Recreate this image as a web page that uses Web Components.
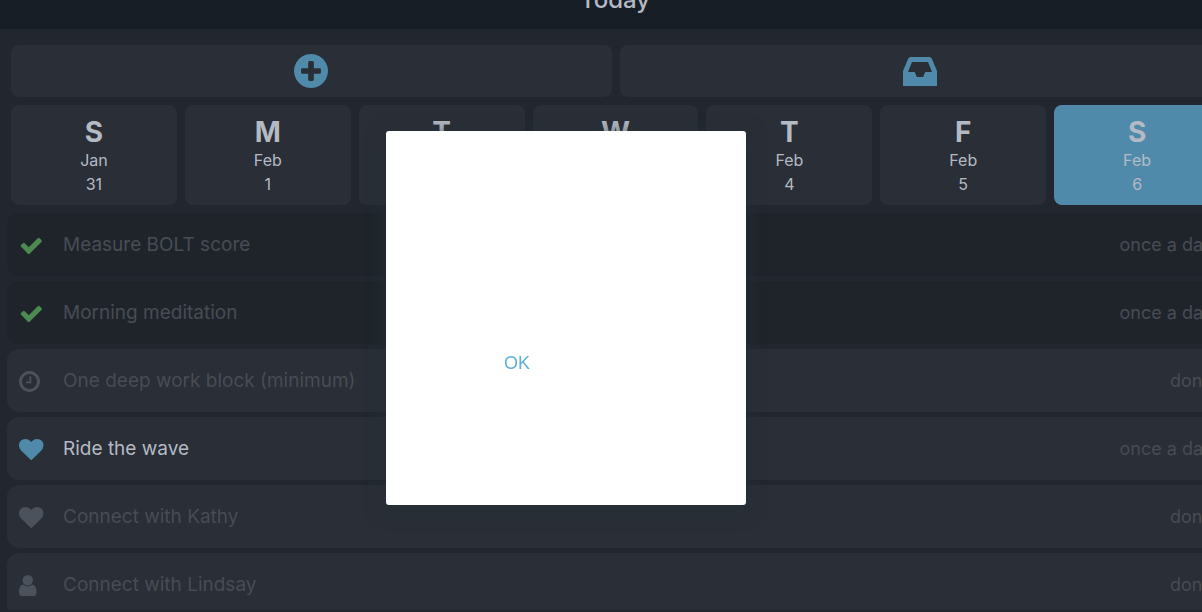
<!DOCTYPE html>
<html lang="en">
<head>
<meta charset="utf-8">
<meta name="viewport" content="width=device-width, initial-scale=1">
<title>Today</title>
<style>
  html, body { margin: 0; height: 100%; overflow: hidden; }
  body { background: #22272f; color: #b4bac4; font-family: Inter, "Noto Sans", sans-serif; }
</style>
</head>
<body>
<today-app></today-app>
<script>
const ICONS = {
  plus: ['128 128 1536 1536', 'M1344 960v-128q0-26-19-45t-45-19h-256v-256q0-26-19-45t-45-19h-128q-26 0-45 19t-19 45v256h-256q-26 0-45 19t-19 45v128q0 26 19 45t45 19h256v256q0 26 19 45t45 19h128q26 0 45-19t19-45v-256h256q26 0 45-19t19-45zm320-64q0 209-103 385.5t-279.5 279.5-385.5 103-385.5-103-279.5-279.5-103-385.5 103-385.5 279.500-279.500 385.500-103 385.500 103 279.500 279.500 103 385.500z'],
  inbox: ['0 0 34 29', 'M0 14 5 2Q6 0 7.500 0h19Q28 0 29 2l5 12v15H0zM9 5 5 15H11.700l2.200 5h6.200l2.200-5H29L25 5z'],
  check: ['0 128 1792 1536', 'M1671 566q0 40-28 68l-724 724-136 136q-28 28-68 28t-68-28l-136-136-362-362q-28-28-28-68t28-68l136-136q28-28 68-28t68 28l294 295 656-657q28-28 68-28t68 28l136 136q28 28 28 68z'],
  clock: ['128 128 1536 1536', 'M1024 544v448q0 14-9 23t-23 9h-320q-14 0-23-9t-9-23v-64q0-14 9-23t23-9h224v-352q0-14 9-23t23-9h64q14 0 23 9t9 23zm416 352q0-148-73-273t-198-198-273-73-273 73-198 198-73 273 73 273 198 198 273 73 273-73 198-198 73-273zm224 0q0 209-103 385.500t-279.500 279.500-385.500 103-385.500-103-279.500-279.500-103-385.500 103-385.500 279.500-279.500 385.500-103 385.500 103 279.500 279.500 103 385.500z'],
  heart: ['0 128 1792 1536', 'M896 1664q-26 0-44-18l-624-602q-10-8-27.500-26t-55.500-65.500-68-97.500-53.500-121-23.500-138q0-220 127-344t351-124q62 0 126.500 21.500t120 58 95.500 68.500 76 68q36-36 76-68t95.500-68.500 120-58 126.500-21.500q224 0 351 124t127 344q0 221-229 450l-623 600q-18 18-44 18z'],
  user: ['256 128 1280 1536', 'M1536 1399q0 109-62.500 187t-150.500 78h-854q-88 0-150.500-78t-62.500-187q0-85 8.500-160.500t31.500-152 58.500-131 94-89 134.500-34.500q131 128 313 128t313-128q76 0 134.500 34.500t94 89 58.500 131 31.500 152 8.500 160.500zm-256-887q0 159-112.500 271.500t-271.500 112.500-271.500-112.500-112.500-271.500 112.500-271.500 271.500-112.500 271.500 112.500 112.500 271.500z']
};

function define(name, render) {
  customElements.define(name, class extends HTMLElement {
    constructor() { super(); this.attachShadow({ mode: 'open' }); }
    connectedCallback() { this.shadowRoot.innerHTML = render(this); }
  });
}

define('app-icon', el => {
  const [box, d] = ICONS[el.getAttribute('name')];
  return `<style>
    :host { display: block; height: 21px; }
    svg { display: block; height: 100%; fill: currentColor; }
  </style><svg viewBox="${box}" aria-hidden="true"><path fill-rule="evenodd" d="${d}"/></svg>`;
});

define('app-header', () => `<style>
  :host { display: flex; justify-content: center; align-items: flex-end; height: 29px;
          overflow: hidden; background: #171e25; }
  h1 { margin: 0; padding-bottom: 13px; font-size: 24px; line-height: 32px; font-weight: 500; }
</style><h1><slot></slot></h1>`);

define('tool-button', el => `<style>
  :host { display: block; flex: 1; color: #508aab; }
  button { display: flex; width: 100%; height: 52px; padding: 0; border: 0; border-radius: 8px;
           justify-content: center; align-items: center; background: #2a2e36; color: inherit; }
  app-icon { height: var(--size); }
</style><button type="button" aria-label="${el.getAttribute('label')}"><app-icon name="${el.getAttribute('icon')}"></app-icon></button>`);

define('day-card', el => `<style>
  :host { display: block; flex: 1 1 0; min-width: 0; }
  button { display: block; width: 100%; height: 100px; padding: 10px 0 8px; border: 0; border-radius: 8px;
           background: #2a2e36; color: inherit; font: 16px/24px Inter, sans-serif; text-align: center; }
  :host([selected]) button { background: #508aab; }
  b, span { display: block; }
  b { font-size: 28px; line-height: 32px; font-weight: 700; }
</style><button type="button"><b>${el.getAttribute('day')}</b><span>${el.getAttribute('month')}</span><span>${el.getAttribute('date')}</span></button>`);

define('habit-row', el => `<style>
  :host { display: flex; align-items: center; height: 63px; padding: 0 12px; box-sizing: border-box;
          border-radius: 12px; background: #2a2e36; color: #474c55; font-size: 18px; line-height: 24px; }
  :host([done]) { background: #1f242b; }
  .icon { width: 44px; padding-top: 2px; color: #4b525b; }
  :host([done]) .icon { color: #4b8b50; }
  :host([active]) .icon { color: #508aab; }
  :host([active]) .name { color: #b4bac4; }
  .name { flex: 1; font-size: 19px; }
</style><div class="icon"><app-icon name="${el.getAttribute('icon')}"></app-icon></div>
<div class="name"><slot></slot></div><div>${el.getAttribute('status')}</div>`);

define('alert-dialog', () => `<style>
  :host { position: fixed; inset: 24px 70px 0 0; display: flex; align-items: center; justify-content: center; }
  section { display: flex; flex-direction: column; align-items: flex-start; box-sizing: border-box;
            width: 360px; height: 374px; padding: 214px 100px 0 110px; border-radius: 3px; background: #fff;
            box-shadow: 0 4px 16px 4px rgba(36, 50, 56, .5); }
  button { padding: 0 8px; border: 0; background: none; color: #5fb0d8;
           font: 18px/36px "Liberation Sans", Arial, sans-serif; }
</style><section role="dialog" aria-modal="true"><button type="button"><slot></slot></button></section>`);

define('today-app', () => `<style>
  :host { display: block; width: calc(100% + 28px); }
  .tools, .days { display: flex; gap: 8px; padding: 0 10px 0 11px; }
  .tools { padding-top: 16px; }
  .days { padding-top: 8px; }
  main { display: flex; flex-direction: column; gap: 5px; padding: 8px 5px 8px 7px; }
  footer { position: fixed; inset: auto 0 0 0; height: 2px; background: #22262e; }
</style>
<app-header>Today</app-header>
<div class="tools">
  <tool-button label="Add" icon="plus" style="--size:34px"></tool-button>
  <tool-button label="Inbox" icon="inbox" style="--size:29px"></tool-button>
</div>
<div class="days">
  <day-card day="S" month="Jan" date="31"></day-card>
  <day-card day="M" month="Feb" date="1"></day-card>
  <day-card day="T" month="Feb" date="2"></day-card>
  <day-card day="W" month="Feb" date="3"></day-card>
  <day-card day="T" month="Feb" date="4"></day-card>
  <day-card day="F" month="Feb" date="5"></day-card>
  <day-card day="S" month="Feb" date="6" selected></day-card>
</div>
<main>
  <habit-row icon="check" status="once a day" done>Measure BOLT score</habit-row>
  <habit-row icon="check" status="once a day" done>Morning meditation</habit-row>
  <habit-row icon="clock" status="done">One deep work block (minimum)</habit-row>
  <habit-row icon="heart" status="once a day" active>Ride the wave</habit-row>
  <habit-row icon="heart" status="done">Connect with Kathy</habit-row>
  <habit-row icon="user" status="done">Connect with Lindsay</habit-row>
</main>
<footer></footer>
<alert-dialog>OK</alert-dialog>`);
</script>
</body>
</html>
